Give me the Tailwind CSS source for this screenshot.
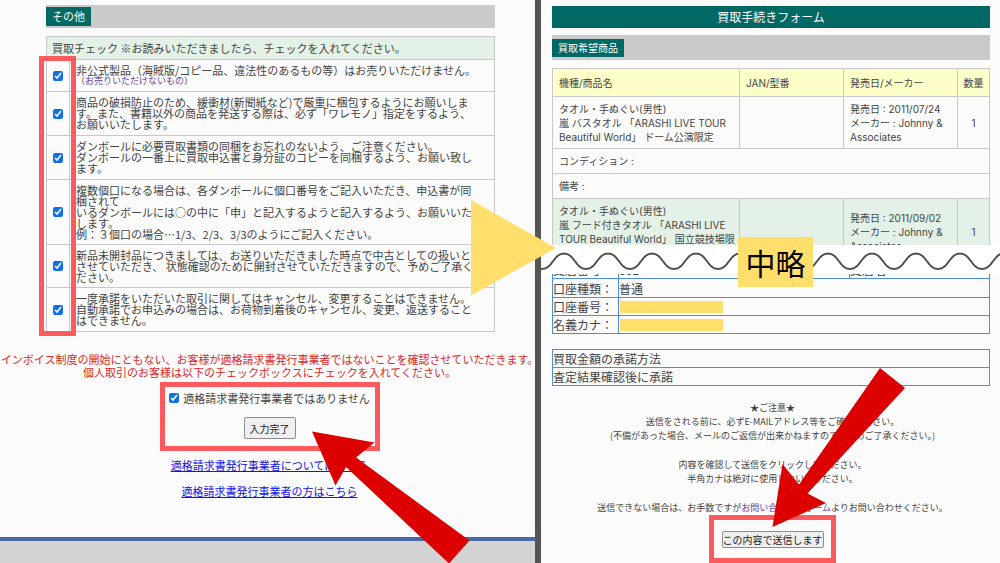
<!DOCTYPE html>
<html lang="ja">
<head>
<meta charset="utf-8">
<meta name="viewport" content="width=device-width, initial-scale=1">
<title>買取手続きフォーム</title>
<script src="https://cdn.jsdelivr.net/npm/@tailwindcss/browser@4"></script>
</head>
<body class="bg-[#fbfbfb] font-['Noto_Sans_CJK_JP',sans-serif] text-[11px] text-[#444]">
<div class="relative grid min-h-screen grid-cols-[535fr_6px_459fr] overflow-hidden">

  <!-- Left: input form -->
  <section class="relative flex min-w-0 flex-col pt-[5px]">
    <h2 class="mr-10 ml-[46px] flex h-[23px] items-center bg-[#cacaca]"><span class="bg-[#016864] px-[6px] leading-[19px] text-white">その他</span></h2>

    <div class="relative mt-2 mr-10 ml-[46px]">
      <table class="w-full border-collapse border border-[#c8c8c8] leading-[11px]">
        <thead>
          <tr class="border-b border-[#c8c8c8] bg-[#e3f1e6]"><th colspan="2" class="px-[5px] text-left leading-[22px] font-normal">買取チェック ※お読みいただきましたら、チェックを入れてください。</th></tr>
        </thead>
        <tbody>
          <tr class="border-b border-[#c8c8c8]">
            <td class="w-[23px] border-r border-[#c8c8c8]"><input id="c1" type="checkbox" checked class="mx-auto block size-[10px] accent-[#0f6fe4]"></td>
            <td class="py-[5px] pl-[6px] whitespace-nowrap"><label for="c1">非公式製品（海賊版/コピー品、違法性のあるもの等）はお売りいただけません。</label><span class="block text-[9px] leading-[10px]">（<a href="#" class="text-[#6b3fa8]">お売りいただけないもの</a>）</span></td>
          </tr>
          <tr class="border-b border-[#c8c8c8]">
            <td class="border-r border-[#c8c8c8]"><input id="c2" type="checkbox" checked class="mx-auto block size-[10px] accent-[#0f6fe4]"></td>
            <td class="py-[5px] pl-[6px] whitespace-nowrap"><label for="c2">商品の破損防止のため、緩衝材(新聞紙など)で厳重に梱包するようにお願いしま<br>す。また、書籍以外の商品を発送する際は、必ず「ワレモノ」指定をするよう、<br>お願いいたします。</label></td>
          </tr>
          <tr class="border-b border-[#c8c8c8]">
            <td class="border-r border-[#c8c8c8]"><input id="c3" type="checkbox" checked class="mx-auto block size-[10px] accent-[#0f6fe4]"></td>
            <td class="py-[5px] pl-[6px] whitespace-nowrap"><label for="c3">ダンボールに必要買取書類の同梱をお忘れのないよう、ご注意ください。<br>ダンボールの一番上に買取申込書と身分証のコピーを同梱するよう、お願い致し<br>ます。</label></td>
          </tr>
          <tr class="border-b border-[#c8c8c8]">
            <td class="border-r border-[#c8c8c8]"><input id="c4" type="checkbox" checked class="mx-auto block size-[10px] accent-[#0f6fe4]"></td>
            <td class="pt-[5px] pb-1 pl-[6px] whitespace-nowrap"><label for="c4">複数個口になる場合は、各ダンボールに個口番号をご記入いただき、申込書が同<br>梱されて<br>いるダンボールには○の中に「申」と記入するようと記入するよう、お願いいた<br>します。<br>例：３個口の場合…1/3、2/3、3/3のようにご記入ください。</label></td>
          </tr>
          <tr class="border-b border-[#c8c8c8]">
            <td class="border-r border-[#c8c8c8]"><input id="c5" type="checkbox" checked class="mx-auto block size-[10px] accent-[#0f6fe4]"></td>
            <td class="pt-[5px] pb-1 pl-[6px] whitespace-nowrap"><label for="c5">新品未開封品につきましては、お送りいただきました時点で中古としての扱いと<br>させていただき、 状態確認のために開封させていただきますので、予めご了承く<br>ださい。</label></td>
          </tr>
          <tr>
            <td class="border-r border-[#c8c8c8]"><input id="c6" type="checkbox" checked class="mx-auto block size-[10px] accent-[#0f6fe4]"></td>
            <td class="py-[5px] pl-[6px] whitespace-nowrap"><label for="c6">一度承諾をいただいた取引に関してはキャンセル、変更することはできません。<br>自動承諾でお申込みの場合は、お荷物到着後のキャンセル、変更、返送すること<br>はできません。</label></td>
          </tr>
        </tbody>
      </table>
      <!-- highlight round the tick boxes -->
      <div class="absolute top-5 -bottom-1 -left-[7px] w-[37px] border-5 border-[#fb5a5e]"></div>
    </div>

    <div class="flex flex-col items-center pl-1 whitespace-nowrap">
      <p class="mt-[21px] flex flex-col items-center leading-[13px] text-[#dd2727]"><span>インボイス制度の開始にともない、お客様が適格請求書発行事業者ではないことを確認させていただきます。</span><span>個人取引のお客様は以下のチェックボックスにチェックを入れてください。</span></p>

      <div class="mt-[3px] flex h-[69px] w-[220px] flex-col items-center border-5 border-[#fb5a5e] pt-[3px]">
        <label for="inv" class="flex items-center gap-1 leading-[16px]"><input id="inv" type="checkbox" checked class="size-[10px] accent-[#0f6fe4]">適格請求書発行事業者ではありません</label>
        <button type="button" class="mt-[11px] h-[22px] rounded-xs border border-[#8c8c8c] bg-[#efefef] px-[5px] text-[10px] text-[#222]">入力完了</button>
      </div>

      <div class="flex flex-col items-center gap-[10px] pt-[6px] leading-[16px] text-[#1414e6]">
        <a href="#" class="underline">適格請求書発行事業者についてはこちら</a>
        <a href="#" class="underline">適格請求書発行事業者の方はこちら</a>
      </div>
    </div>
    <footer class="mt-auto h-[26px] border-t-4 border-[#4a68a6] bg-[#d3d3d3]"></footer>
  </section>

  <div class="bg-[#555]"></div>

  <!-- Right: confirmation form -->
  <section class="relative flex min-w-0 flex-col pt-[6px]">
    <h1 class="mr-[10px] ml-[11px] bg-[#016864] text-center text-[12px] leading-[22px] text-white">買取手続きフォーム</h1>
    <h2 class="mt-[7px] mr-[10px] ml-[11px] flex h-[25px] items-center bg-[#cacaca] text-[10px]"><span class="bg-[#016864] px-[6px] leading-[18px] text-white">買取希望商品</span></h2>

    <div class="mt-2 mr-[10px] ml-[11px] h-[177px] overflow-hidden">
      <table class="w-full table-fixed border-collapse border border-[#c8c8c8] font-[Inter,'Noto_Sans_CJK_JP',sans-serif] text-[10px] leading-[14px]">
        <colgroup><col><col class="w-[104px]"><col class="w-[114px]"><col class="w-8"></colgroup>
        <thead>
          <tr class="h-7 bg-[#fefec9] text-left">
            <th class="border border-[#c8c8c8] px-[6px] font-normal">機種/商品名</th>
            <th class="border border-[#c8c8c8] px-[6px] font-normal">JAN/型番</th>
            <th class="border border-[#c8c8c8] px-[6px] font-normal">発売日/メーカー</th>
            <th class="border border-[#c8c8c8] text-center font-normal">数量</th>
          </tr>
        </thead>
        <tbody>
          <tr class="h-[52px]">
            <td class="border border-[#c8c8c8] px-[6px] whitespace-nowrap">タオル・手ぬぐい(男性)<br>嵐 バスタオル 「ARASHI LIVE TOUR<br>Beautiful World」 ドーム公演限定</td>
            <td class="border border-[#c8c8c8]"></td>
            <td class="border border-[#c8c8c8] px-[6px] whitespace-nowrap">発売日 : 2011/07/24<br>メーカー : Johnny &amp;<br>Associates</td>
            <td class="border border-[#c8c8c8] text-center">1</td>
          </tr>
          <tr class="h-[25px]"><td colspan="4" class="border border-[#c8c8c8] px-[6px]">コンディション :</td></tr>
          <tr class="h-[25px]"><td colspan="4" class="border border-[#c8c8c8] px-[6px]">備考 :</td></tr>
          <tr class="h-[66px] bg-[#e3f1e6]">
            <td class="border border-[#c8c8c8] px-[6px] pt-[5px] align-top whitespace-nowrap">タオル・手ぬぐい(男性)<br>嵐 フード付きタオル 「ARASHI LIVE<br>TOUR Beautiful World」 国立競技場限</td>
            <td class="border border-[#c8c8c8]"></td>
            <td class="border border-[#c8c8c8] px-[6px] whitespace-nowrap">発売日 : 2011/09/02<br>メーカー : Johnny &amp;<br>Associates</td>
            <td class="border border-[#c8c8c8] text-center">1</td>
          </tr>
        </tbody>
      </table>
    </div>

    <!-- torn-out middle part -->
    <div class="relative z-10 h-[29px] overflow-hidden bg-white">
      <svg class="block h-[29px] w-[484px]" viewBox="541 245 484 29" fill="none" stroke="#505050" stroke-width="2">
        <path d="M520 253.5C531 253.5 531 269 542 269S553 253.500 564 253.500S575 269 586 269S597 253.500 608 253.500S619 269 630 269S641 253.500 652 253.500S663 269 674 269S685 253.500 696 253.500S707 269 718 269S729 253.500 740 253.500S751 269 762 269S773 253.500 784 253.500S795 269 806 269S817 253.500 828 253.500S839 269 850 269S861 253.500 872 253.500S883 269 894 269S905 253.500 916 253.500S927 269 938 269S949 253.500 960 253.500S971 269 982 269S993 253.500 1004 253.500S1015 269 1026 269"/>
      </svg>
    </div>

    <table class="-mt-[14px] mr-[10px] ml-[11px] table-fixed border-collapse border border-[#4a90e2] text-[12px] leading-[17px]">
      <colgroup><col class="w-[66px]"><col><col class="w-[140px]"></colgroup>
      <tbody>
        <tr class="h-[18px]"><th class="border border-[#4a90e2] text-left font-normal whitespace-nowrap">支店番号：</th><td class="border border-[#4a90e2]">001</td><td class="border border-[#4a90e2]">支店名</td></tr>
        <tr class="h-[19px]"><th class="border border-[#4a90e2] text-left font-normal whitespace-nowrap">口座種類：</th><td colspan="2" class="border border-[#4a90e2]">普通</td></tr>
        <tr class="h-[18px]"><th class="border border-[#4a90e2] text-left font-normal whitespace-nowrap">口座番号：</th><td colspan="2" class="border border-[#4a90e2]"><div class="ml-px h-3 w-[103px] bg-[#ffdf6b]"></div></td></tr>
        <tr class="h-[18px]"><th class="border border-[#4a90e2] text-left font-normal whitespace-nowrap">名義カナ：</th><td colspan="2" class="border border-[#4a90e2]"><div class="ml-px h-3 w-[103px] bg-[#ffdf6b]"></div></td></tr>
      </tbody>
    </table>

    <table class="mt-[15px] mr-[10px] ml-[11px] border-collapse border border-[#4a90e2] text-[12px] leading-[17px]">
      <tbody>
        <tr><th class="border border-[#4a90e2] text-left font-normal">買取金額の承諾方法</th></tr>
        <tr><td class="border border-[#4a90e2]">査定結果確認後に承諾</td></tr>
      </tbody>
    </table>

    <div class="flex flex-col items-center pl-1">
      <div class="mt-[15px] flex flex-col gap-[15px] text-center text-[9px] leading-[14px] whitespace-nowrap">
        <p>★ご注意★<br>送信をされる前に、必ずE-MAILアドレス等をご確認ください。<br>(不備があった場合、メールのご返信が出来かねますので、予めご了承ください。)</p>
        <p>内容を確認して送信をクリックしてください。<br>半角カナは絶対に使用しないでください。</p>
        <p>送信できない場合は、お手数ですが<a href="#" class="text-[#6b3fa8]">お問い合わせフォーム</a>よりお問い合わせください。</p>
      </div>

      <div class="flex h-12 w-[127px] items-center justify-center border-5 border-[#fb5a5e]">
        <button type="button" class="h-[17px] rounded-xs border border-[#8c8c8c] bg-[#efefef] text-[10px] leading-[15px] whitespace-nowrap text-[#222]">この内容で送信します</button>
      </div>
    </div>
  </section>

  <!-- annotations -->
  <svg class="pointer-events-none absolute top-0 left-0 z-20 h-[563px] w-full" viewBox="0 0 1000 563" aria-hidden="true">
    <path fill="#ffdf6b" d="M471 200 556 248 471 295.500Z"/>
    <path fill="#dc0000" d="M312 431.500 374.500 442.500 356 457.500 469.500 540.500 449 563.500 346 467 335.500 485.500Z"/>
    <path fill="#dc0000" d="M880 368 905 388 807.500 493.500 826 503 772.500 527 782.500 464 799 484.500Z"/>
  </svg>
  <div class="absolute top-[237px] left-[738px] z-30 flex h-[50px] w-[75px] items-center justify-center bg-[#ffdf6b] text-[30px] leading-none whitespace-nowrap text-black">中略</div>
</div>
</body>
</html>
